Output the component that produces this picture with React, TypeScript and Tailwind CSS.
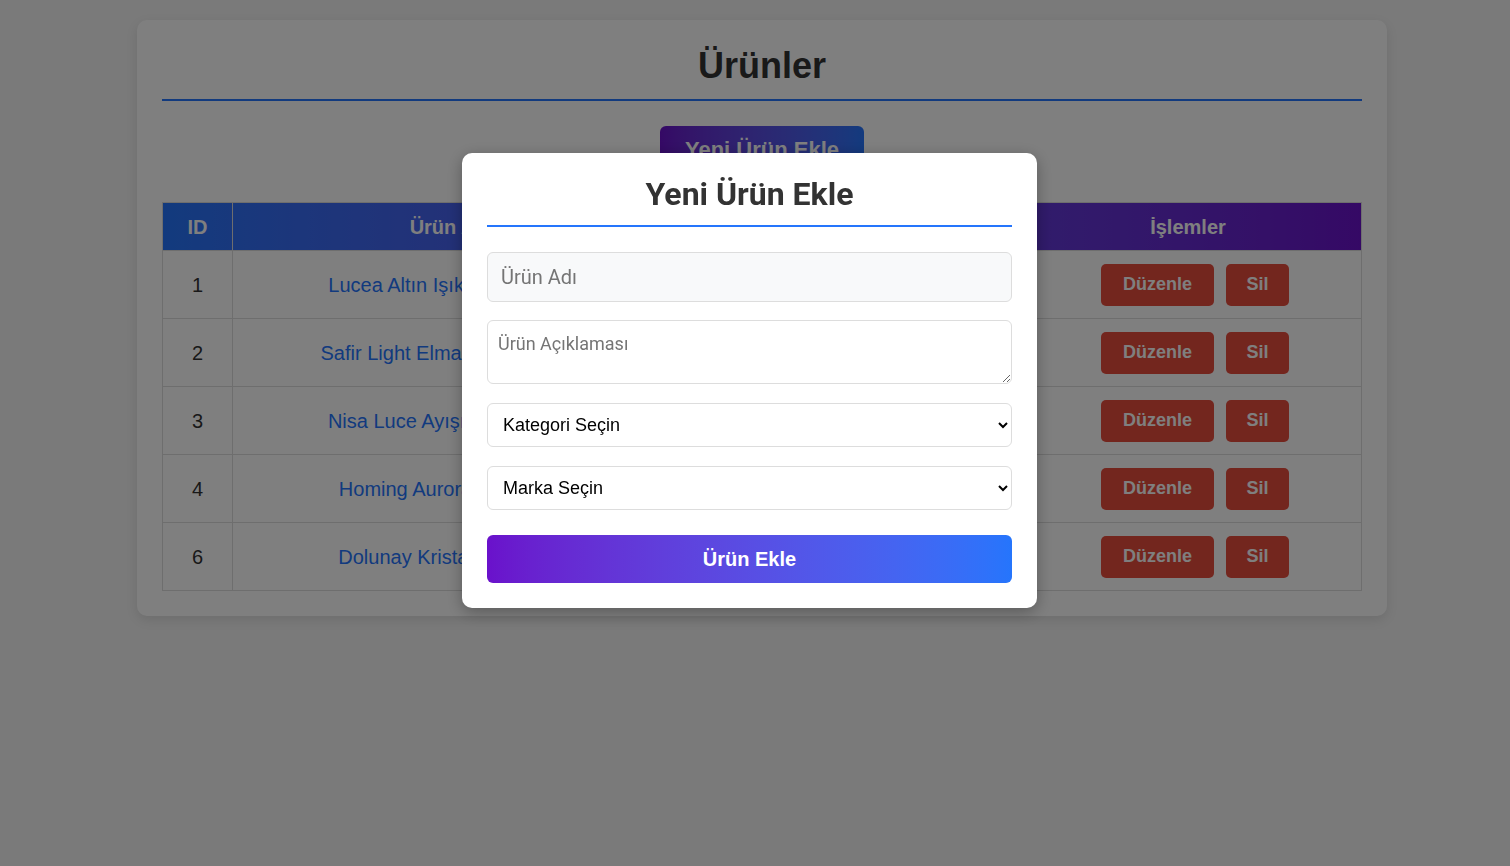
import { useState } from "react";

const products = [
  { id: 1, name: "Lucea Altın Işık Sarkıt Avize", category: "Aydınlatma", brand: "Lucea" },
  { id: 2, name: "Safir Light Elmas Sarkıt Avize", category: "Aydınlatma", brand: "Safir" },
  { id: 3, name: "Nisa Luce Ayışığı Avize Seti", category: "Aydınlatma", brand: "Nisa" },
  { id: 4, name: "Homing Aurora Led Avize", category: "Avize", brand: "Homing" },
  { id: 6, name: "Dolunay Kristal Led Avize", category: "Avize", brand: "Dolunay" },
];

export default function App() {
  const [open] = useState(true);

  return (
    <div className="min-h-[866px] bg-[#f4f4f4] pt-[20px] font-['Liberation_Sans',Arial,sans-serif] text-[#333]">
      <div className="ml-[137px] w-[1250px] rounded-[10px] bg-white p-[25px] shadow-[0_4px_12px_rgba(0,0,0,0.1)]">
        <h1 className="border-b-2 border-[#2575fc] pb-[13px] text-center text-[36px] leading-[41px] font-bold text-[#333]">
          Ürünler
        </h1>
        <div className="mt-[25px] flex justify-center">
          <button className="h-[46px] rounded-[6px] bg-gradient-to-r from-[#6a11cb] to-[#2575fc] px-[25px] text-[22px] font-bold text-white">
            Yeni Ürün Ekle
          </button>
        </div>
        <table className="mt-[30px] w-full border-collapse text-[20px]">
          <thead>
            <tr className="h-[48px] bg-gradient-to-r from-[#2575fc] to-[#6a11cb] text-[20px] font-bold text-white">
              <th className="w-[70px] border border-[#ddd]">ID</th>
              <th className="w-[438px] border border-[#ddd]">Ürün Adı</th>
              <th className="w-[172px] border border-[#ddd]">Kategori</th>
              <th className="w-[172px] border border-[#ddd]">Marka</th>
              <th className="border border-[#ddd]">İşlemler</th>
            </tr>
          </thead>
          <tbody>
            {products.map((p) => (
              <tr key={p.id} className="h-[68px]">
                <td className="border border-[#ddd] text-center">{p.id}</td>
                <td className="border border-[#ddd] text-center text-[#2575fc]">{p.name}</td>
                <td className="border border-[#ddd] text-center">{p.category}</td>
                <td className="border border-[#ddd] text-center">{p.brand}</td>
                <td className="border border-[#ddd] text-center">
                  <div className="flex justify-center gap-[12px] pl-[14px]">
                    <button className="h-[42px] w-[113px] rounded-[5px] bg-[#e74c3c] text-[18px] font-bold text-white">
                      Düzenle
                    </button>
                    <button className="h-[42px] w-[63px] rounded-[5px] bg-[#e74c3c] text-[18px] font-bold text-white">
                      Sil
                    </button>
                  </div>
                </td>
              </tr>
            ))}
          </tbody>
        </table>
      </div>

      {open && (
        <div className="fixed inset-0 bg-black/50 pl-[462px] pt-[153px]">
          <div className="w-[575px] rounded-[10px] bg-white p-[25px] shadow-[0_4px_16px_rgba(0,0,0,0.3)]">
            <h2 className="border-b-2 border-[#2575fc] pb-[14px] text-center font-['Roboto',Arial,sans-serif] text-[32px] leading-[33px] font-bold text-[#333]">
              Yeni Ürün Ekle
            </h2>
            <div className="mt-[25px] flex flex-col">
              <input
                placeholder="Ürün Adı"
                className="h-[50px] rounded-[6px] border border-[#ddd] bg-[#f8f9fa] px-[13px] font-['Roboto',Arial,sans-serif] text-[20px] placeholder:text-[#757575]"
              />
              <textarea
                placeholder="Ürün Açıklaması"
                className="mt-[18px] h-[64px] rounded-[6px] border border-[#ddd] bg-white px-[10px] py-[9px] font-['Roboto',Arial,sans-serif] text-[18px] placeholder:text-[#757575]"
              />
              <select className="mt-[19px] h-[44px] rounded-[6px] border border-[#ddd] bg-white pl-[11px] pr-[6px] text-[18px] text-black">
                <option>Kategori Seçin</option>
              </select>
              <select className="mt-[19px] h-[44px] rounded-[6px] border border-[#ddd] bg-white pl-[11px] pr-[6px] text-[18px] text-black">
                <option>Marka Seçin</option>
              </select>
              <button className="mt-[25px] h-[48px] rounded-[6px] bg-gradient-to-r from-[#6a11cb] to-[#2575fc] text-[20px] font-bold text-white">
                Ürün Ekle
              </button>
            </div>
          </div>
        </div>
      )}
    </div>
  );
}
